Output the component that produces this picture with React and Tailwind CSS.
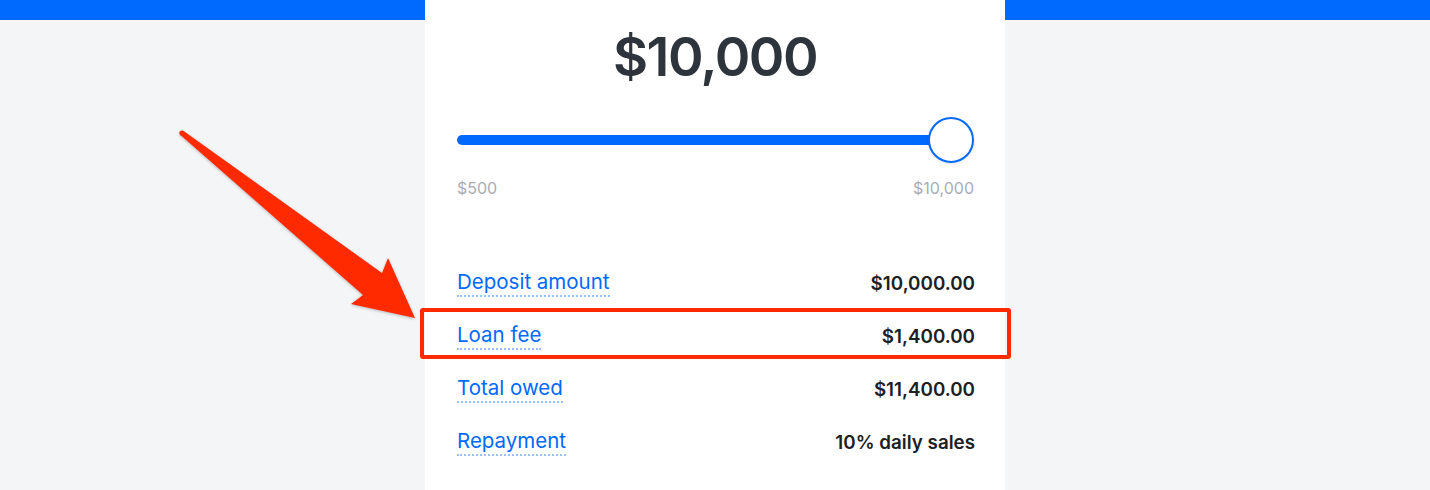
import React from "react";

function Row({ label, value, highlight }) {
  return (
    <div className="relative flex h-[53px] items-center justify-between">
      {highlight && (
        <div className="pointer-events-none absolute left-[-37px] right-[-38px] top-[-2px] bottom-[4px] rounded-[3px] border-[4px] border-[#ff2a00]" />
      )}
      <span className="relative border-b-2 border-dotted border-[#9cc0ff] pb-[1px] text-[20.5px] leading-[24px] text-[#006aff]">
        {label}
      </span>
      <span className="relative mr-[-2px] text-[18.8px] font-semibold leading-[24px] text-[#1c2024]">
        {value}
      </span>
    </div>
  );
}

export default function App() {
  return (
    <div
      className="relative flex h-[490px] w-full overflow-hidden bg-[#f4f5f7]"
      style={{ fontFamily: "Inter, 'Open Sans', sans-serif" }}
    >
      <div className="flex-1">
        <div className="h-[20px] bg-[#006aff]" />
      </div>
      <div className="w-[580px] bg-white px-[32px]">
        <div className="pt-[22px] text-center text-[54px] font-semibold leading-[70px] tracking-[-1.5px] text-[#2d343b]">
          $10,000
        </div>
        <div className="relative mt-[25px] h-[46px]">
          <div className="absolute left-0 right-[20px] top-[18px] h-[10px] rounded-full bg-[#006aff]" />
          <div className="absolute right-[-1px] top-0 h-[46px] w-[46px] rounded-full border-[2px] border-[#006aff] bg-white shadow-[0_1px_3px_rgba(0,0,0,0.12)]" />
        </div>
        <div className="mt-[15px] flex justify-between text-[16px] leading-[20px] text-[#a9adb2]">
          <span>$500</span>
          <span className="mr-[-1px]">$10,000</span>
        </div>
        <div className="mt-[59px]">
          <Row label="Deposit amount" value="$10,000.00" />
          <Row label="Loan fee" value="$1,400.00" highlight />
          <Row label="Total owed" value="$11,400.00" />
          <Row label="Repayment" value="10% daily sales" />
        </div>
      </div>
      <div className="flex-1">
        <div className="h-[20px] bg-[#006aff]" />
      </div>
      <svg
        className="pointer-events-none absolute left-0 top-0"
        width="1430"
        height="490"
        viewBox="0 0 1430 490"
        style={{ filter: "drop-shadow(0 1px 1.5px rgba(0,0,0,0.25))" }}
      >
        <circle cx="182" cy="133" r="2.6" fill="#ff2a00" />
        <polygon
          points="180.4,135.1 183.6,130.9 382,273 388,258 415,318 351,304 363,295"
          fill="#ff2a00"
        />
      </svg>
    </div>
  );
}
